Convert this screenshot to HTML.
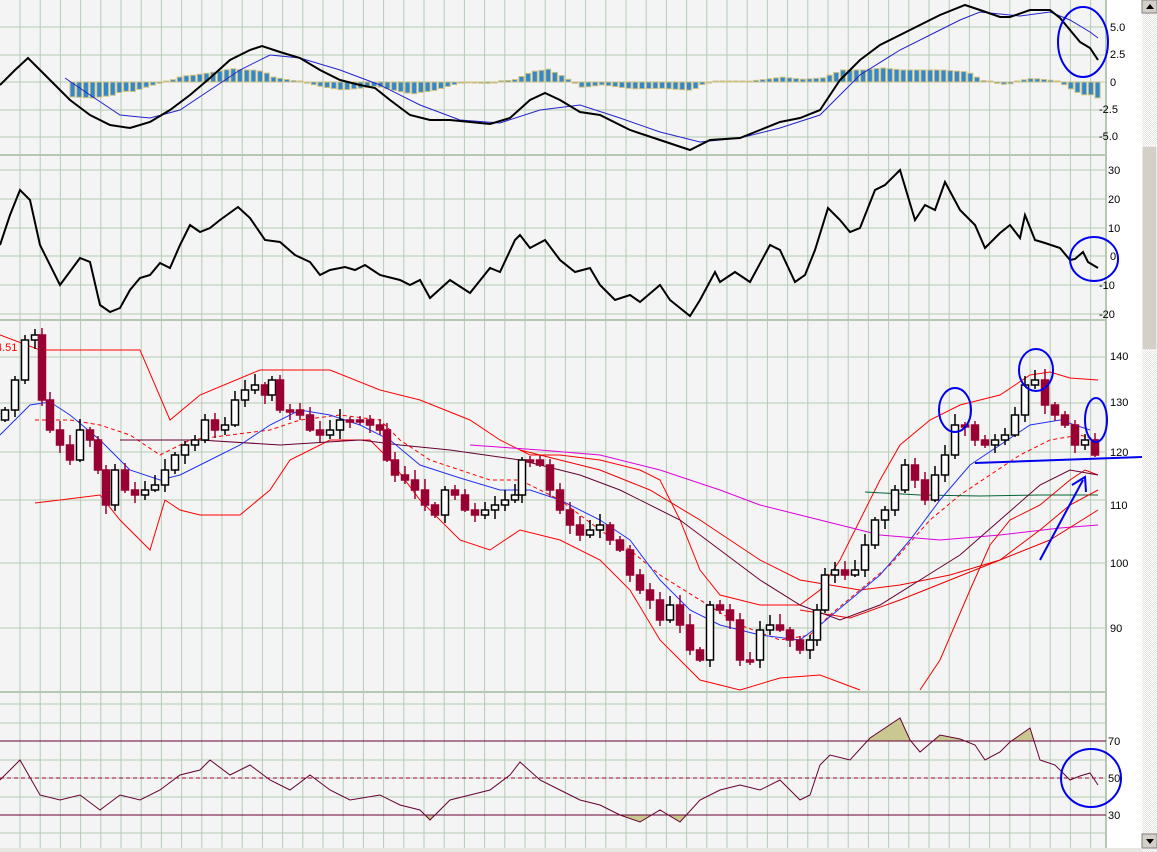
<!DOCTYPE html>
<html><head><meta charset="utf-8"><style>
html,body{margin:0;padding:0;background:#fff;width:1157px;height:852px;overflow:hidden}
svg{display:block}
text{font-family:"Liberation Sans",sans-serif;font-size:11px;fill:#000}
</style></head><body>
<svg id="s" width="1157" height="852" xmlns="http://www.w3.org/2000/svg">
<rect x="0" y="0" width="1157" height="852" fill="#fff"/>
<rect x="0" y="0" width="1106" height="848" fill="#f4f4f4"/>
<g id="grid" stroke="#b4ccb4" stroke-width="1"></g>
<g stroke="#b4c8b4" stroke-width="2">
<line x1="0" y1="155" x2="1106" y2="155"/><line x1="0" y1="320" x2="1106" y2="320"/><line x1="0" y1="692" x2="1106" y2="692"/>
<line x1="1106" y1="0" x2="1106" y2="848"/>
</g>
<g id="hist"></g>
<polyline fill="none" stroke="#2222cc" stroke-width="1" points="65,78 90,95 120,115 150,118 180,110 210,90 240,70 270,55 300,58 340,70 380,85 420,105 460,120 500,123 540,110 580,105 620,118 660,132 700,142 740,138 780,128 820,115 860,75 900,50 940,30 960,20 980,12 1000,14 1020,16 1050,12 1070,20 1090,32 1098,38"/>
<polyline fill="none" stroke="#000" stroke-width="2" points="0,85 15,70 28,58 40,70 55,85 70,100 90,115 110,125 130,128 150,122 170,110 190,95 210,78 230,60 250,50 262,46 280,52 300,58 320,70 340,80 360,85 375,88 390,100 410,115 430,120 450,120 470,122 490,124 510,118 530,100 545,93 560,100 580,112 600,115 630,130 660,140 690,150 710,140 740,138 760,130 780,122 800,118 820,110 840,80 860,60 880,45 900,35 920,25 940,15 965,5 980,10 1000,17 1010,17 1030,10 1050,10 1060,18 1070,30 1080,42 1090,48 1098,60"/>
<polyline fill="none" stroke="#000" stroke-width="2" points="0,245 10,215 20,190 30,200 40,245 60,285 80,258 90,262 100,305 110,312 120,308 130,290 140,278 150,275 160,263 170,268 180,245 190,225 200,232 210,228 220,220 238,207 250,218 265,240 280,242 295,255 310,262 320,275 330,270 345,267 355,270 365,265 380,275 400,280 410,285 420,280 430,298 450,280 470,293 490,268 500,272 515,240 520,235 530,248 545,240 560,260 575,272 590,268 600,285 615,300 630,295 640,302 660,285 670,300 690,316 700,300 715,272 720,282 735,272 750,282 770,245 780,250 795,282 805,275 815,250 828,208 840,220 850,232 860,228 875,190 885,185 900,170 915,220 925,205 935,210 945,182 960,210 975,225 985,248 1000,233 1010,225 1020,238 1025,215 1035,240 1045,243 1060,248 1070,260 1075,259 1083,252 1088,262 1098,268"/>
<g fill="none" stroke-width="1">
<polyline stroke="#ff0000" points="0,335 40,350 100,350 140,350 170,420 200,395 260,370 330,370 380,390 420,400 470,420 500,440 530,455 560,455 600,460 640,470 660,480 680,520 700,570 720,595 760,605 800,605 820,590 840,560 860,520 880,480 900,445 930,420 960,405 1000,395 1030,375 1050,372 1070,378 1098,380"/>
<polyline stroke="#ff0000" points="35,503 60,500 100,495 120,520 150,550 165,500 180,510 200,515 240,515 270,490 290,460 330,440 370,440 390,460 420,500 460,540 490,550 520,530 560,540 600,560 630,590 660,640 700,680 740,690 780,678 820,675 860,690"/>
<polyline stroke="#ff0000" stroke-dasharray="4,3" points="35,420 70,420 100,425 130,435 160,455 190,440 230,435 270,430 300,420 340,415 380,420 400,440 430,460 460,470 490,480 520,480 560,500 600,530 630,550 660,575 700,600 740,625 780,640 810,635 830,615 860,590 890,565 930,520 960,495 990,475 1020,455 1050,440 1080,435 1098,440"/>
<polyline stroke="#dd00dd" points="470,445 540,450 600,455 660,470 720,490 760,505 800,515 840,525 880,535 940,540 1000,535 1060,528 1098,525"/>
<polyline stroke="#006633" points="865,492 920,495 980,496 1040,495 1098,495"/>
<polyline stroke="#ee0000" points="520,450 600,470 650,490 700,520 760,560 800,580 860,590 900,585 950,575 1000,560 1050,540 1098,510"/>
<polyline stroke="#ee0000" points="800,610 850,618 900,600 950,580 1000,560 1040,530 1070,505 1098,490"/>
<polyline stroke="#ee0000" points="920,690 940,660 970,590 990,545 1010,520 1040,505 1070,480 1085,470 1098,475"/>
<polyline stroke="#660033" points="120,440 200,440 280,445 360,440 400,445 450,450 520,460 580,475 620,490 680,520 720,550 760,580 800,605 840,620 880,605 920,580 960,555 1000,520 1040,485 1070,470 1098,475"/>
<polyline stroke="#2233ee" points="0,435 30,405 50,402 70,415 100,440 130,470 160,480 180,475 210,460 240,445 270,425 300,410 330,415 360,425 390,440 420,465 460,478 500,490 530,490 560,500 600,520 630,540 660,580 690,610 720,625 760,635 800,640 820,625 850,600 880,575 910,540 940,500 970,465 1000,445 1030,425 1060,420 1090,430"/>
</g>
<g id="candles"></g>
<text x="-4" y="351" style="fill:#ff0000">4.51</text>
<defs><clipPath id="ab"><rect x="0" y="690" width="1106" height="51"/></clipPath><clipPath id="bl"><rect x="0" y="815" width="1106" height="30"/></clipPath></defs>
<g id="rsi"></g>
<line x1="0" y1="741" x2="1106" y2="741" stroke="#660033"/>
<line x1="0" y1="815" x2="1106" y2="815" stroke="#660033"/>
<line x1="0" y1="778" x2="1106" y2="778" stroke="#990033" stroke-dasharray="4,3"/>
<rect x="1107" y="0" width="35" height="848" fill="#fff"/>
<g>
<text x="1110" y="31">5.0</text><text x="1110" y="58">2.5</text><text x="1110" y="86">0</text><text x="1099" y="113">-2.5</text><text x="1099" y="140">-5.0</text>
<text x="1108" y="174">30</text><text x="1108" y="203">20</text><text x="1108" y="232">10</text><text x="1110" y="260">0</text><text x="1099" y="289">-10</text><text x="1099" y="318">-20</text>
<text x="1110" y="360">140</text><text x="1110" y="406">130</text><text x="1110" y="456">120</text><text x="1110" y="509">110</text><text x="1110" y="567">100</text><text x="1110" y="632">90</text>
<text x="1108" y="745">70</text><text x="1108" y="782">50</text><text x="1108" y="819">30</text>
</g>
<g fill="none" stroke="#0000ee" stroke-width="2">
<ellipse cx="1083" cy="42" rx="25" ry="35"/>
<ellipse cx="1094" cy="259" rx="24" ry="22"/>
<ellipse cx="955" cy="410" rx="16" ry="22"/>
<ellipse cx="1036" cy="370" rx="17" ry="21"/>
<ellipse cx="1096" cy="420" rx="11" ry="22"/>
<ellipse cx="1091" cy="778" rx="30" ry="29"/>
<line x1="975" y1="463" x2="1142" y2="457"/>
<line x1="1040" y1="560" x2="1083" y2="480"/>
<polyline points="1072,485 1085,477 1086,492"/>
</g>
<defs><pattern id="chk" width="2" height="2" patternUnits="userSpaceOnUse"><rect width="1" height="1" fill="#fff"/><rect x="1" y="1" width="1" height="1" fill="#fff"/></pattern></defs>
<rect x="1142" y="0" width="15" height="852" fill="#e4e2de"/>
<rect x="1142" y="0" width="15" height="852" fill="url(#chk)"/>
<rect x="1142" y="0" width="15" height="13" fill="#d4d0c8" stroke="#808080"/>
<polygon points="1146,9 1150,4 1154,9" fill="#000"/>
<rect x="1142" y="146" width="15" height="204" fill="#d4d0c8" stroke="#fff"/>
<rect x="1142" y="834" width="15" height="14" fill="#d4d0c8" stroke="#808080"/>
<polygon points="1146,839 1154,839 1150,844" fill="#000"/>
<rect x="0" y="848" width="1142" height="4" fill="#e8e6e2"/>
</svg>
<script>
var NS="http://www.w3.org/2000/svg";
function el(t,a,p){var e=document.createElementNS(NS,t);for(var k in a)e.setAttribute(k,a[k]);p.appendChild(e);return e;}
var g=document.getElementById('grid');
for(var x=20;x<1106;x+=20.2)el('line',{x1:x,y1:0,x2:x,y2:848},g);
[27,55,82,110,137,170,199,228,256,285,314,357,403,452,500,563,628,704,723,741,760,778,797,815,833].forEach(function(y){el('line',{x1:0,y1:y,x2:1106,y2:y},g);});
function interp(pts,x){for(var i=0;i<pts.length-1;i++){if(x>=pts[i][0]&&x<=pts[i+1][0]){var t=(x-pts[i][0])/(pts[i+1][0]-pts[i][0]);return pts[i][1]+t*(pts[i+1][1]-pts[i][1]);}}return x<pts[0][0]?pts[0][1]:pts[pts.length-1][1];}
function P(s){return s.trim().split(/\s+/).map(function(p){return p.split(',').map(Number);});}
var macd=P("0,85 15,70 28,58 40,70 55,85 70,100 90,115 110,125 130,128 150,122 170,110 190,95 210,78 230,60 250,50 262,46 280,52 300,58 320,70 340,80 360,85 375,88 390,100 410,115 430,120 450,120 470,122 490,124 510,118 530,100 545,93 560,100 580,112 600,115 630,130 660,140 690,150 710,140 740,138 760,130 780,122 800,118 820,110 840,80 860,60 880,45 900,35 920,25 940,15 965,5 980,10 1000,17 1010,17 1030,10 1050,10 1060,18 1070,30 1080,42 1090,48 1098,60");
var sig=P("0,70 65,78 90,95 120,115 150,118 180,110 210,90 240,70 270,55 300,58 340,70 380,85 420,105 460,120 500,123 540,110 580,105 620,118 660,132 700,142 740,138 780,128 820,115 860,75 900,50 940,30 960,20 980,12 1000,14 1020,16 1050,12 1070,20 1090,32 1098,38");
var h=document.getElementById('hist');
for(var x=70;x<1100;x+=6.7){var d=(interp(sig,x)-interp(macd,x))*0.8;if(Math.abs(d)<0.8)d=d<0?-1:1;var y=d>0?82-d:82;el('rect',{x:x,y:y,width:5,height:Math.abs(d),fill:'#3388cc',stroke:'#ccc080','stroke-width':1},h);}
var cl=P("5,410 15,380 25,340 35,335 42,400 50,430 60,445 70,460 80,430 90,440 98,470 106,505 115,470 125,490 135,495 145,490 155,485 165,470 175,455 185,445 195,440 205,420 215,430 225,425 235,400 245,390 255,385 265,395 272,380 280,410 290,410 300,415 310,430 320,435 330,430 340,420 350,420 360,420 370,425 380,430 387,460 395,475 405,480 415,490 425,505 435,515 445,490 455,495 465,510 475,515 485,510 495,505 505,500 515,495 522,460 530,460 540,465 550,490 560,510 570,525 580,535 590,530 600,525 610,540 620,550 630,575 640,590 650,600 660,620 670,605 680,625 690,650 700,660 710,605 720,610 730,620 740,660 750,660 760,630 770,625 780,630 790,640 800,650 810,640 817,610 825,575 835,570 845,575 855,570 865,545 875,520 885,510 895,490 905,465 915,480 925,500 935,475 945,455 955,425 965,425 975,440 985,445 995,440 1005,435 1015,415 1025,385 1035,380 1045,405 1055,415 1065,425 1075,445 1085,440 1095,455");
var c=document.getElementById('candles');var prev=420;
cl.forEach(function(p,i){var o=prev,cc=p[1];var up=cc<o;var top=Math.min(o,cc),bot=Math.max(o,cc);if(bot-top<2){bot=top+2;}
var w=((i*37)%9)+3;el('line',{x1:p[0],y1:top-w,x2:p[0],y2:bot+((i*53)%8)+2,stroke:up?'#000':'#990033','stroke-width':1.5},c);
el('rect',{x:p[0]-3.5,y:top,width:7,height:bot-top,fill:up?'#fff':'#990033',stroke:up?'#000':'#990033','stroke-width':1.5},c);prev=cc;});
var rs="0,780 20,760 40,795 60,800 80,795 100,810 120,795 140,800 160,790 180,775 200,770 210,760 230,775 250,765 270,780 290,790 310,775 330,790 350,800 380,795 400,805 420,810 430,820 450,800 470,795 490,790 510,775 520,762 540,780 560,790 580,800 600,805 620,815 640,822 660,810 680,822 700,800 720,790 740,785 760,790 780,780 800,800 810,795 820,765 830,755 850,760 870,738 900,718 910,740 920,752 940,735 960,739 975,745 985,760 1000,752 1010,742 1030,728 1040,760 1055,765 1070,780 1080,776 1090,773 1098,785";
var r=document.getElementById('rsi');
el('polygon',{points:"0,741 "+rs+" 1098,741",fill:'#c8c890','clip-path':'url(#ab)'},r);
el('polygon',{points:"0,815 "+rs+" 1098,815",fill:'#c8c890','clip-path':'url(#bl)'},r);
el('polyline',{points:rs,fill:'none',stroke:'#660033','stroke-width':1},r);
</script>
</body></html>
